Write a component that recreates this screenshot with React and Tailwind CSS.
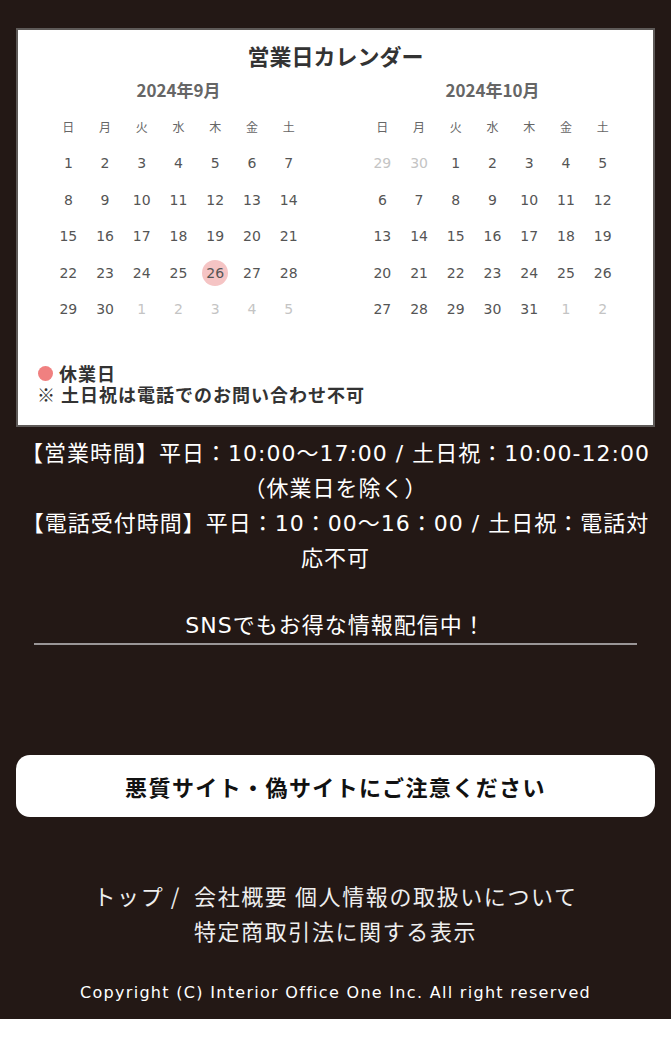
const WEEK = ['日', '月', '火', '水', '木', '金', '土']

const SEP = [
  [1, 2, 3, 4, 5, 6, 7],
  [8, 9, 10, 11, 12, 13, 14],
  [15, 16, 17, 18, 19, 20, 21],
  [22, 23, 24, 25, 26, 27, 28],
  [29, 30, -1, -2, -3, -4, -5]
]

const OCT = [
  [-29, -30, 1, 2, 3, 4, 5],
  [6, 7, 8, 9, 10, 11, 12],
  [13, 14, 15, 16, 17, 18, 19],
  [20, 21, 22, 23, 24, 25, 26],
  [27, 28, 29, 30, 31, -1, -2]
]

function Month({ title, rows, holidays = [] }) {
  return (
    <div className="w-[257px]">
      <div className="text-center text-[17px] font-bold text-[#666] leading-[22px]">
        {title}
      </div>
      <div className="grid grid-cols-7 mt-[8px]">
        {WEEK.map(w => (
          <div key={w} className="h-[36.5px] flex items-center justify-center text-[12px] text-[#666]">
            {w}
          </div>
        ))}
        {rows.flat().map((d, i) => {
          const other = d < 0
          const off = holidays.includes(d)
          return (
            <div key={i} className="h-[36.5px] flex items-center justify-center">
              <span
                className={
                  'w-[26px] h-[26px] rounded-full flex items-center justify-center text-[14px] [font-family:"DejaVu_Sans",sans-serif] ' +
                  (other ? 'text-[#c4c4c4]' : 'text-[#555]') +
                  (off ? ' bg-[#f5c4c4]' : '')
                }
              >
                {Math.abs(d)}
              </span>
            </div>
          )
        })}
      </div>
    </div>
  )
}

export default function App() {
  return (
    <div className="bg-white">
      <div className="bg-[#231815] h-[1019px] pt-[28px] px-[16px] [font-family:'Noto_Sans_CJK_JP',sans-serif]">
        {/* Calendar */}
        <div className="border-2 border-[#5e5a58] bg-white pt-[10px] pb-[20px]">
          <h2 className="text-center text-[22px] font-bold text-[#333] leading-[30px]">
            営業日カレンダー
          </h2>
          <div className="flex justify-between px-[32px] mt-[9px]">
            <Month title="2024年9月" rows={SEP} holidays={[26]} />
            <Month title="2024年10月" rows={OCT} />
          </div>
          <div className="mt-[35px] pl-[19px] text-[18px] font-bold text-[#333] leading-[21px] tracking-[1px]">
            <div className="flex items-center gap-[6px] pl-[1px]">
              <span className="w-[15px] h-[15px] rounded-full bg-[#f08080] inline-block" />
              <span>休業日</span>
            </div>
            <div>※ 土日祝は電話でのお問い合わせ不可</div>
          </div>
        </div>

        {/* Hours */}
        <div className="mt-[9px] text-center text-white text-[22px] leading-[35px] tracking-[1px] [font-family:'DejaVu_Sans','Noto_Sans_CJK_JP',sans-serif]">
          <p>
            【営業時間】平日：10:00〜17:00 / 土日祝：10:00-12:00
            <br />
            （休業日を除く）
          </p>
          <p>
            【電話受付時間】平日：10：00〜16：00 / 土日祝：電話対
            <br />
            応不可
          </p>
          <p className="mt-[32px] mx-[18px] border-b-2 border-[#9a9697]">
            SNSでもお得な情報配信中！
          </p>
        </div>

        {/* Warning button */}
        <div className="mt-[110px] h-[62px] bg-white rounded-[14px] flex items-center justify-center">
          <span className="text-[22px] font-bold text-[#111] tracking-[1.4px]">
            悪質サイト・偽サイトにご注意ください
          </span>
        </div>

        {/* Footer links */}
        <div className="mt-[61px] text-center text-[#eee] text-[22px] leading-[35px] tracking-[1.6px]">
          <div>トップ /&nbsp; 会社概要 個人情報の取扱いについて</div>
          <div>特定商取引法に関する表示</div>
        </div>

        <div className="mt-[33px] text-center text-white text-[16px] tracking-[1.3px] [font-family:'DejaVu_Sans',sans-serif]">
          Copyright (C) Interior Office One Inc. All right reserved
        </div>
      </div>
    </div>
  )
}
